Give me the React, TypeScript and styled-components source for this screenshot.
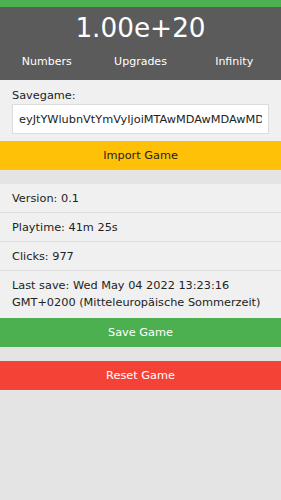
import React from "react";
import styled, { createGlobalStyle } from "styled-components";

const FONT = `"DejaVu Sans", Verdana, sans-serif`;

const Global = createGlobalStyle`
  html, body { margin: 0; padding: 0; background: #e4e4e4; }
  body { font-family: ${FONT}; font-size: 11.3px; color: #222; }
  * { box-sizing: border-box; }
`;

const TopBar = styled.div`
  height: 7px;
  background: #4caf50;
`;

const Header = styled.header`
  background: #5b5b5b;
  color: #fff;
  padding: 3px 0 8px;
`;

const BigNumber = styled.div`
  text-align: center;
  font-size: 26.3px;
  line-height: 36px;
`;

const Nav = styled.nav`
  display: grid;
  grid-template-columns: repeat(3, 1fr);
  margin-top: 6px;
`;

const NavItem = styled.div`
  text-align: center;
  font-size: 11px;
  line-height: 20px;
`;

const Panel = styled.section`
  background: #f0f0f0;
  padding-top: 8px;
`;

const Label = styled.div`
  padding: 0 12px;
  line-height: 16px;
`;

const InputWrap = styled.div`
  padding: 0 12px 7px;
`;

const Input = styled.input`
  display: block;
  width: 100%;
  height: 30px;
  border: 1px solid #dcdcdc;
  background: #fff;
  padding: 0 6px;
  font-family: ${FONT};
  font-size: 11.3px;
  color: #222;
  outline: none;
`;

const Button = styled.button<{ $bg: string; $fg: string }>`
  display: block;
  width: 100%;
  height: 29px;
  border: none;
  margin: 0;
  padding: 0;
  background: ${(p) => p.$bg};
  color: ${(p) => p.$fg};
  font-family: ${FONT};
  font-size: 11.3px;
  text-align: center;
  cursor: pointer;
`;

const Spacer = styled.div`
  height: 14px;
`;

const List = styled.ul`
  list-style: none;
  margin: 0;
  padding: 0;
  background: #f0f0f0;
`;

const Item = styled.li`
  padding: 5.5px 12px;
  line-height: 17px;
  border-bottom: 1px solid #dddddd;
  &:last-child {
    border-bottom: none;
    padding-bottom: 7.5px;
  }
`;

export default function App() {
  return (
    <>
      <Global />
      <TopBar />
      <Header>
        <BigNumber>1.00e+20</BigNumber>
        <Nav>
          <NavItem>Numbers</NavItem>
          <NavItem>Upgrades</NavItem>
          <NavItem>Infinity</NavItem>
        </Nav>
      </Header>
      <Panel>
        <Label>Savegame:</Label>
        <InputWrap>
          <Input readOnly value="eyJtYWlubnVtYmVyIjoiMTAwMDAwMDAwMDAwMDAwMDAwMDAwIiwiY2xpY2tzIjo5Nzd9" />
        </InputWrap>
        <Button $bg="#ffc107" $fg="#222">Import Game</Button>
      </Panel>
      <Spacer />
      <List>
        <Item>Version: 0.1</Item>
        <Item>Playtime: 41m 25s</Item>
        <Item>Clicks: 977</Item>
        <Item>Last save: Wed May 04 2022 13:23:16 GMT+0200 (Mitteleuropäische Sommerzeit)</Item>
      </List>
      <Button $bg="#4caf50" $fg="#fff">Save Game</Button>
      <Spacer />
      <Button $bg="#f44336" $fg="#fff">Reset Game</Button>
    </>
  );
}
